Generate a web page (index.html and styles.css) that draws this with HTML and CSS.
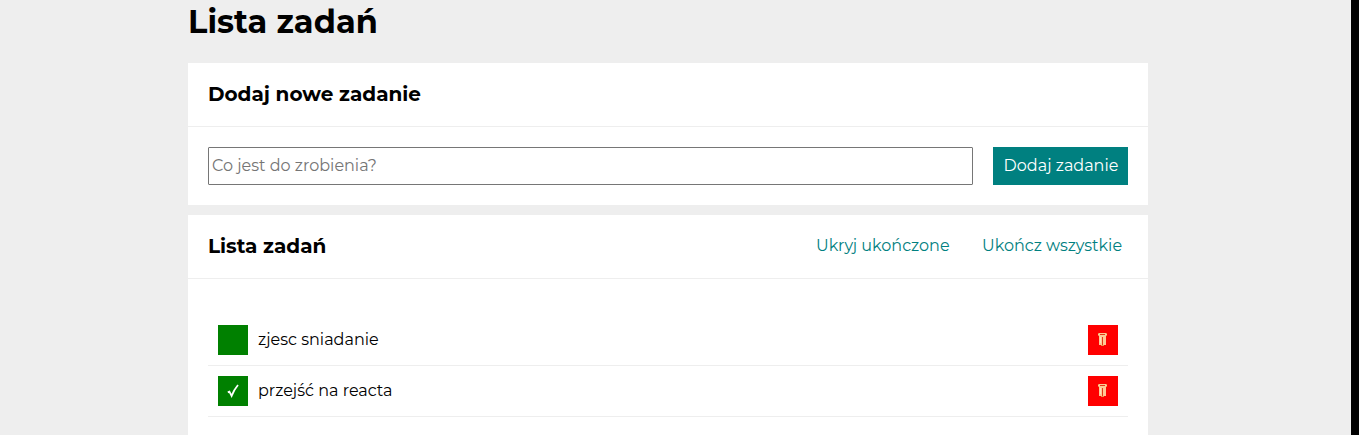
FILE: index.html
```html
<!DOCTYPE html>
<html lang="pl">
<head>
<meta charset="utf-8">
<title>Lista zadań</title>
<link rel="stylesheet" href="styles.css">
</head>
<body>
<main class="container">
  <h1 class="title">Lista zadań</h1>
  <section class="section">
    <header class="section__header"><h2 class="section__title">Dodaj nowe zadanie</h2></header>
    <form class="form">
      <input class="form__input" placeholder="Co jest do zrobienia?">
      <button class="form__button" type="button">Dodaj zadanie</button>
    </form>
  </section>
  <section class="section section--list">
    <header class="section__header">
      <h2 class="section__title">Lista zadań</h2>
      <div class="actions">
        <button class="actions__button actions__button--hide">Ukryj ukończone</button>
        <button class="actions__button actions__button--all">Ukończ wszystkie</button>
      </div>
    </header>
    <ul class="tasks">
      <li class="task">
        <button class="task__button" aria-label="Ukończ"></button>
        <span class="task__text">zjesc sniadanie</span>
        <button class="task__button task__button--remove" aria-label="Usuń"><svg class="bin" width="10" height="14" viewBox="0 0 10 14"><path fill="#ffc894" d="M0 0h9v3H8v9H6v1H3v-1H1V3H0z"/><path fill="#e8924c" d="M0 0h1v1H0zM8 0h1v1H8zM0 2h1v1H0zM8 2h1v1H8zM3 12h3v1H3z"/><path fill="#e33b18" d="M2 1h5v1H2zM4 4h1v8H4z"/><path fill="#ffe0bd" d="M2 4h1v6H2z"/></svg></button>
      </li>
      <li class="task">
        <button class="task__button" aria-label="Cofnij"><svg class="check" width="12" height="14" viewBox="0 0 12 14"><path d="M.8 8.4 2.4 7.7 4.6 11.9Q7.2 5.4 11 1" fill="none" stroke="#fff" stroke-width="1.8"/></svg></button>
        <span class="task__text">przejść na reacta</span>
        <button class="task__button task__button--remove" aria-label="Usuń"><svg class="bin" width="10" height="14" viewBox="0 0 10 14"><path fill="#ffc894" d="M0 0h9v3H8v9H6v1H3v-1H1V3H0z"/><path fill="#e8924c" d="M0 0h1v1H0zM8 0h1v1H8zM0 2h1v1H0zM8 2h1v1H8zM3 12h3v1H3z"/><path fill="#e33b18" d="M2 1h5v1H2zM4 4h1v8H4z"/><path fill="#ffe0bd" d="M2 4h1v6H2z"/></svg></button>
      </li>
    </ul>
  </section>
</main>
</body>
</html>
```
FILE: styles.css
```css
* { box-sizing: border-box; }
html { height: 100%; background: #eee; }
body {
  margin: 0;
  height: 435px;
  background: #eee;
  border-right: 8px solid #000;
  padding-left: 188px;
  font-family: Montserrat, Inter, sans-serif;
  font-size: 16px;
  color: #000;
}
button, input { font: inherit; border: 0; margin: 0; padding: 0; letter-spacing: inherit; }
h1, h2, ul { margin: 0; padding: 0; }
.container { width: 960px; }
.title { height: 63px; padding-top: 2px; font-size: 32px; line-height: 39px; font-weight: 700; letter-spacing: 0.05px; white-space: nowrap; }
.section { background: #fff; margin-bottom: 10px; }
.section--list { height: 220px; margin-bottom: 0; }
.section__header {
  display: flex;
  justify-content: space-between;
  align-items: center;
  height: 64px;
  padding: 0 20px 2px;
  border-bottom: 1px solid #eee;
}
.section__title { font-size: 20px; line-height: 24px; font-weight: 700; }
.form { display: flex; gap: 20px; height: 78px; padding: 20px; }
.form__input { flex: 1; border: 1px solid #767676; border-radius: 1px; padding: 0 3px 2px; background: #fff; }
.form__input::placeholder { color: #757575; opacity: 1; }
.form__button { width: 135px; padding: 0 0 2px 1px; background: teal; color: #fff; white-space: nowrap; }
.actions { display: flex; gap: 32px; padding-right: 6px; }
.actions__button { background: none; color: teal; white-space: nowrap; text-align: left; }
.actions__button--hide { width: 134px; }
.actions__button--all { width: 140px; }
.tasks { list-style: none; padding: 36px 20px 0; }
.task { display: flex; align-items: center; gap: 10px; height: 51px; padding: 0 10px; border-bottom: 1px solid #eee; }
.task__text { flex: 1; padding-bottom: 2px; }
.task__button { display: flex; align-items: center; justify-content: center; width: 30px; height: 30px; background: green; }
.task__button--remove { background: red; }
.bin, .check { display: block; }
```
